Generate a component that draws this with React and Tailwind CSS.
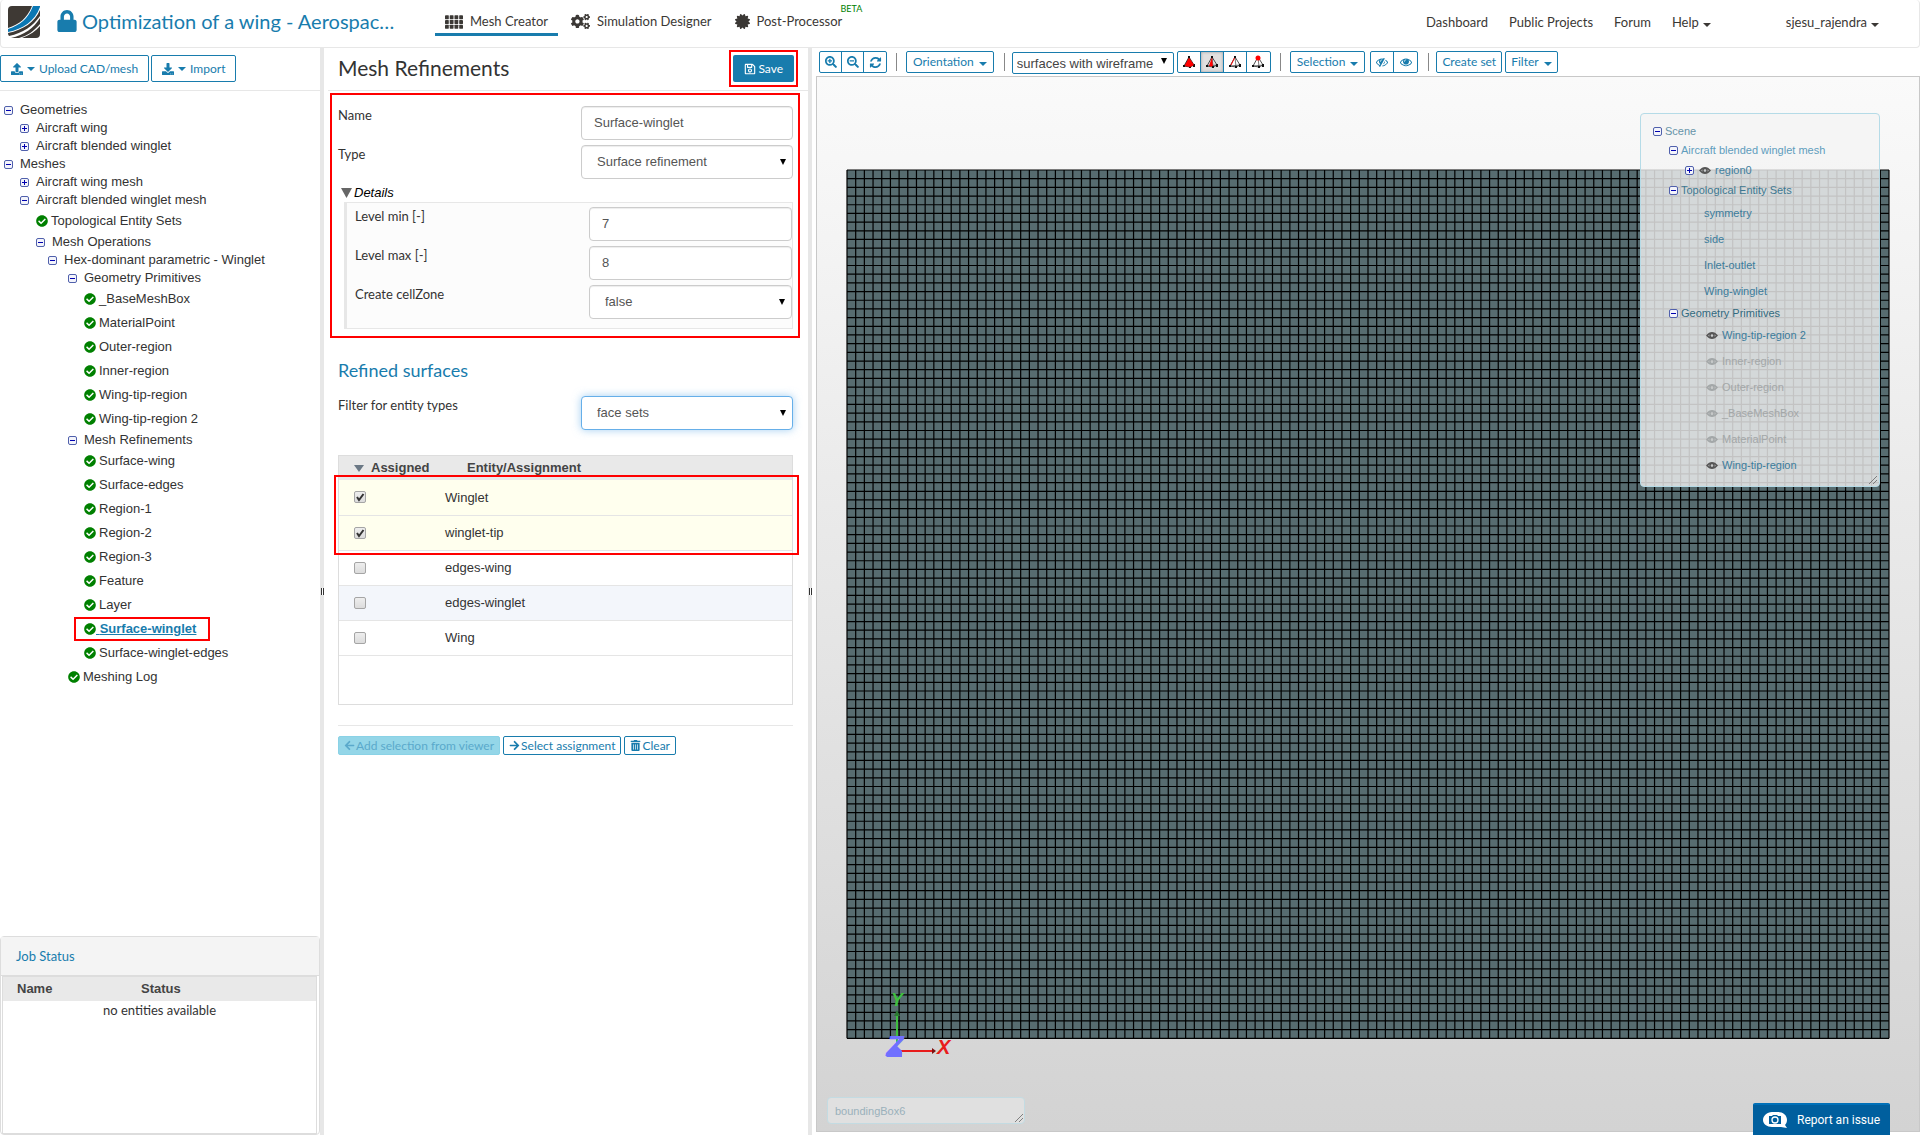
import { useState } from 'react';
import {
  FaArrowLeft,
  FaArrowRight,
  FaCertificate,
  FaCheckCircle,
  FaCogs,
  FaDownload,
  FaLock,
  FaRegSave,
  FaSearchMinus,
  FaSearchPlus,
  FaTrashAlt,
  FaUpload,
} from 'react-icons/fa';

const tree = [
  { label: 'Geometries', icon: 'minus', pad: 'pl-1' },
  { label: 'Aircraft wing', icon: 'plus', pad: 'pl-5' },
  { label: 'Aircraft blended winglet', icon: 'plus', pad: 'pl-5' },
  { label: 'Meshes', icon: 'minus', pad: 'pl-1' },
  { label: 'Aircraft wing mesh', icon: 'plus', pad: 'pl-5' },
  { label: 'Aircraft blended winglet mesh', icon: 'minus', pad: 'pl-5' },
  { label: 'Topological Entity Sets', icon: 'check', pad: 'pl-9' },
  { label: 'Mesh Operations', icon: 'minus', pad: 'pl-9' },
  { label: 'Hex-dominant parametric - Winglet', icon: 'minus', pad: 'pl-12' },
  { label: 'Geometry Primitives', icon: 'minus', pad: 'pl-17' },
  { label: '_BaseMeshBox', icon: 'check', pad: 'pl-21' },
  { label: 'MaterialPoint', icon: 'check', pad: 'pl-21' },
  { label: 'Outer-region', icon: 'check', pad: 'pl-21' },
  { label: 'Inner-region', icon: 'check', pad: 'pl-21' },
  { label: 'Wing-tip-region', icon: 'check', pad: 'pl-21' },
  { label: 'Wing-tip-region 2', icon: 'check', pad: 'pl-21' },
  { label: 'Mesh Refinements', icon: 'minus', pad: 'pl-17' },
  { label: 'Surface-wing', icon: 'check', pad: 'pl-21' },
  { label: 'Surface-edges', icon: 'check', pad: 'pl-21' },
  { label: 'Region-1', icon: 'check', pad: 'pl-21' },
  { label: 'Region-2', icon: 'check', pad: 'pl-21' },
  { label: 'Region-3', icon: 'check', pad: 'pl-21' },
  { label: 'Feature', icon: 'check', pad: 'pl-21' },
  { label: 'Layer', icon: 'check', pad: 'pl-21' },
  { label: 'Surface-winglet', icon: 'check', pad: 'pl-21', active: true },
  { label: 'Surface-winglet-edges', icon: 'check', pad: 'pl-21' },
  { label: 'Meshing Log', icon: 'check', pad: 'pl-17' },
];

const scene = [
  { label: 'Scene', toggle: 'minus', cls: 'h-[18px] pl-3 text-[#6593a8]' },
  { label: 'Aircraft blended winglet mesh', toggle: 'minus', cls: 'h-5 pl-7 text-[#5f9dbd]' },
  { label: 'region0', toggle: 'plus', eye: true, cls: 'h-5 pl-11 text-[#3f7f9f]' },
  { label: 'Topological Entity Sets', toggle: 'minus', cls: 'h-5 pl-7 text-[#3d7892]' },
  { label: 'symmetry', cls: 'h-[26px] pl-[63px] text-[#3b7c9c]' },
  { label: 'side', cls: 'h-[26px] pl-[63px] text-[#3b7c9c]' },
  { label: 'Inlet-outlet', cls: 'h-[26px] pl-[63px] text-[#3b7c9c]' },
  { label: 'Wing-winglet', cls: 'h-[26px] pl-[63px] text-[#3b7c9c]' },
  { label: 'Geometry Primitives', toggle: 'minus', cls: 'h-[18px] pl-7 text-[#326a80]' },
  { label: 'Wing-tip-region 2', eye: true, cls: 'h-[26px] pl-16 text-[#3b7c9c]' },
  { label: 'Inner-region', eye: true, off: true, cls: 'h-[26px] pl-16 text-[#a3a7a8]' },
  { label: 'Outer-region', eye: true, off: true, cls: 'h-[26px] pl-16 text-[#a3a7a8]' },
  { label: '_BaseMeshBox', eye: true, off: true, cls: 'h-[26px] pl-16 text-[#a3a7a8]' },
  { label: 'MaterialPoint', eye: true, off: true, cls: 'h-[26px] pl-16 text-[#a3a7a8]' },
  { label: 'Wing-tip-region', eye: true, cls: 'h-[26px] pl-16 text-[#3b7c9c]' },
];

const COLS = 120;
const ROWS = 100;

function Logo() {
  return (
    <svg viewBox="0 0 32 32" className="size-8">
      <path fill="#3e3934" d="M4 0h20C19 13 11 18 0 22V4q0-4 4-4z" />
      <path fill="#0a77b3" d="M25 0h7v1C27 15 15 23 0 26v-3C12 19 20 13 25 0z" />
      <path fill="#3e3934" d="M32 4v6C25 20 15 27 1 30q-1-1-1-3C15 24 27 16 32 4z" />
      <path fill="#3e3934" d="M32 12v6C26 25 19 30 11 32H3C16 29 26 22 32 12z" />
      <path fill="#3e3934" d="M32 20v8q0 4-4 4H14c8-3 14-7 18-12z" />
    </svg>
  );
}

function Caret({ className = '' }) {
  return (
    <svg viewBox="0 0 8 4" className={`h-1 w-2 shrink-0 fill-current ${className}`}>
      <path d="M0 0h8L4 4z" />
    </svg>
  );
}

function Toggle({ type }) {
  return (
    <svg viewBox="0 0 9 9" className="size-[9px] shrink-0">
      <rect x=".5" y=".5" width="8" height="8" rx="1.5" fill="#f3f4fb" stroke="#5060ac" />
      <path d={type === 'plus' ? 'M2 4.5h5M4.5 2v5' : 'M2 4.5h5'} stroke="#0000b0" />
    </svg>
  );
}

function EyeIcon({ className }) {
  return (
    <svg viewBox="0 0 1792 1792" className={className}>
      <path d="M1664 960q-152-236-381-353 61 104 61 225 0 185-131.5 316.5t-316.5 131.5-316.5-131.5-131.5-316.5q0-121 61-225-229 117-381 353 133 205 333.5 326.5t434.5 121.5 434.5-121.5 333.5-326.5zm-720-384q0-20-14-34t-34-14q-125 0-214.5 89.5t-89.5 214.5q0 20 14 34t34 14 34-14 14-34q0-86 61-147t147-61q20 0 34-14t14-34zm848 384q0 34-20 69-140 230-376.5 368.5t-499.5 138.5-499.5-139-376.5-368q-20-35-20-69t20-69q140-229 376.5-368t499.5-139 499.5 139 376.5 368q20 35 20 69z" />
    </svg>
  );
}

// flat eye used in the scene tree
function SceneEye({ className }) {
  return (
    <svg viewBox="0 0 12 9" className={`h-[9px] w-3 shrink-0 ${className}`}>
      <path fillRule="evenodd" d="M0 4.5C2 2 4 1 6 1s4 1 6 3.500C10 7 8 8 6 8S2 7 0 4.500zM2.300 4.500l1 1.200V3.300zM9.700 4.500l-1-1.200v2.400zM6 3.200a1.300 1.300 0 100 2.600 1.300 1.300 0 000-2.600z" />
    </svg>
  );
}

function EyeSlashIcon({ className }) {
  return (
    <svg viewBox="0 0 1792 1792" className={className}>
      <path d="M555 1335l78-141q-87-63-136-159t-49-203q0-121 61-225-229 117-381 353 167 258 427 375zm389-759q0-20-14-34t-34-14q-125 0-214.5 89.5t-89.5 214.5q0 20 14 34t34 14 34-14 14-34q0-86 61-147t147-61q20 0 34-14t14-34zm363-191q0 7-1 9-105 188-315 566t-316 567l-49 89q-10 16-28 16-12 0-134-70-16-10-16-28 0-12 44-87-143-65-263.5-173t-208.5-245q-20-31-20-69t20-69q153-235 380-371t496-136q89 0 180 17l54-97q10-16 28-16 5 0 18 6t31 15.5 33 18.5 31.5 18.5 19.5 11.5q16 10 16 27zm37 447q0 139-79 253.5t-209 164.5l280-502q8 45 8 84zm448 128q0 35-20 69-39 64-109 145-150 172-347.5 267t-419.5 95l74-132q212-18 392.5-137t301.5-307q-115-179-282-294l63-112q95 64 182.5 153t144.5 184q20 34 20 69z" />
    </svg>
  );
}

function RefreshIcon({ className }) {
  return (
    <svg viewBox="0 0 1792 1792" className={className}>
      <path d="M1639 1056q0 5-1 7-64 268-268 434.5t-478 166.5q-146 0-282.5-55t-243.5-157l-129 129q-19 19-45 19t-45-19-19-45v-448q0-26 19-45t45-19h448q26 0 45 19t19 45-19 45l-137 137q71 66 161 102t187 36q134 0 250-65t186-179q11-17 53-117 8-23 30-23h192q13 0 22.5 9.5t9.5 22.5zm25-800v448q0 26-19 45t-45 19h-448q-26 0-45-19t-19-45 19-45l138-138q-148-137-349-137-134 0-250 65t-186 179q-11 17-53 117-8 23-30 23h-199q-13 0-22.5-9.5t-9.5-22.5v-7q65-268 270-434.5t480-166.5q146 0 284 55.5t245 156.5l130-129q19-19 45-19t45 19 19 45z" />
    </svg>
  );
}

// 4x3 block grid used for the mesh creator tab
function GridIcon() {
  return (
    <svg viewBox="0 0 19 14" className="h-3.5 w-[18px] fill-current">
      {[0, 5, 10].map((y) =>
        [0, 5, 10, 15].map((x) => <rect key={`${x}-${y}`} x={x} y={y} width="4" height="4" rx=".5" />)
      )}
    </svg>
  );
}

// tetrahedron with the picked entity kind in red
function TetraIcon({ kind }) {
  return (
    <svg viewBox="0 0 14 14" className="size-3.5">
      <path d="M7 2L2 11l6 1 4-2z" fill={kind === 'volume' ? '#f00' : 'none'} stroke="#222" strokeWidth=".8" />
      <path d="M7 2l1 10M2 11l10-1" stroke="#222" strokeWidth=".6" fill="none" />
      {kind === 'face' && <path d="M7 2L4 11l4 1z" fill="#f00" />}
      {kind === 'edge' && <path d="M7 2L3 10" stroke="#f00" />}
      <path d="M1 10h2v2H1zM11 9h2v3h-2zM7 11h2v2H7zM6 1h2v2H6z" fill="#111" />
      {kind === 'volume' && <path d="M7 3L3 11l5 1 4-2z" fill="#f00" />}
      {kind === 'vertex' && <circle cx="7" cy="3" r="2.5" fill="#f00" />}
    </svg>
  );
}

function SelectBox({ id, defaultValue, focused }) {
  return (
    <div className="relative">
      <select
        id={id}
        defaultValue={defaultValue}
        className={`h-[34px] w-full appearance-none rounded border bg-white px-[15px] font-[Liberation_Sans,sans-serif] text-[13px] text-[#555] outline-none ${
          focused
            ? 'border-[#66afe9] shadow-[0_0_8px_rgba(102,175,233,0.6)]'
            : 'border-[#ccc] shadow-[inset_0_1px_1px_rgba(0,0,0,0.075)]'
        }`}
      >
        <option>{defaultValue}</option>
      </select>
      <svg viewBox="0 0 6 6" className="pointer-events-none absolute top-3.5 right-[7px] size-1.5">
        <path d="M0 0h6L3 6z" />
      </svg>
    </div>
  );
}

function TextBox({ id, defaultValue }) {
  return (
    <input
      id={id}
      type="text"
      defaultValue={defaultValue}
      className="h-[34px] w-full rounded border border-[#ccc] bg-white px-3 pb-0.5 font-[Liberation_Sans,sans-serif] text-[13px] text-[#555] shadow-[inset_0_1px_1px_rgba(0,0,0,0.075)] outline-none"
    />
  );
}

function Field({ id, label, children, width = 'w-[212px]' }) {
  return (
    <div className="flex items-start justify-between">
      <label htmlFor={id} className="text-[13px] leading-[18px]">
        {label}
      </label>
      <div className={width}>{children}</div>
    </div>
  );
}

function Splitter() {
  return (
    <div className="flex w-1 shrink-0 items-center justify-end bg-[#e7e7e7]">
      <div className="h-[7px] w-[3px] border-x border-[#333] bg-white" />
    </div>
  );
}

function Header() {
  const tab = 'flex h-9 items-center gap-[7px] border-b-3 px-2.5 pt-2.5 text-[13px]';
  return (
    <header className="flex h-12 shrink-0 items-start rounded border border-t-0 border-[#e7e7e7] bg-white text-[#3b3835]">
      <a href="#home" aria-label="Home" className="mt-1.5 ml-[7px]">
        <Logo />
      </a>
      <h1 className="mt-[5px] ml-4 flex h-8 w-[354px] items-center gap-1 text-xl text-[#187cad]">
        <FaLock className="size-[22px] shrink-0" />
        <span className="truncate">Optimization of a wing - Aerospac…</span>
      </h1>
      <nav className="ml-[25px] flex gap-[3px]">
        <a href="#mesh" className={`${tab} border-[#187cad]`}>
          <GridIcon />
          Mesh Creator
        </a>
        <a href="#simulation" className={`${tab} border-transparent`}>
          <FaCogs className="size-[19px]" />
          Simulation Designer
        </a>
        <a href="#post" className={`${tab} relative border-transparent`}>
          <FaCertificate className="size-[15px]" />
          Post-Processor
          <span className="absolute top-0.5 -right-2.5 text-[9px] text-[#008000]">BETA</span>
        </a>
      </nav>
      <nav className="mr-10 ml-auto flex h-[46px] items-center gap-[21px] text-[13px]">
        <a href="#dashboard">Dashboard</a>
        <a href="#projects">Public Projects</a>
        <a href="#forum">Forum</a>
        <button className="flex items-center gap-1">
          Help
          <Caret className="mt-1" />
        </button>
        <button className="ml-[54px] flex items-center gap-1">
          sjesu_rajendra
          <Caret className="mt-1" />
        </button>
      </nav>
    </header>
  );
}

function TreeRow({ item }) {
  const leaf = item.icon === 'check';
  return (
    <li className={`flex items-center ${item.pad} ${leaf ? 'h-6' : 'h-[18px]'}`}>
      {leaf ? (
        <a href="#item" className="relative flex items-center">
          <FaCheckCircle className="size-3 text-[#008000]" />
          {item.active ? (
            <>
              <span className="font-bold whitespace-pre text-[#187cad] underline"> {item.label}</span>
              <span className="pointer-events-none absolute -inset-y-0.5 -right-3.5 -left-2.5 border-2 border-[#f00]" />
            </>
          ) : (
            <span className="ml-[3px]">{item.label}</span>
          )}
        </a>
      ) : (
        <button className="flex items-center gap-[7px]">
          <Toggle type={item.icon} />
          {item.label}
        </button>
      )}
    </li>
  );
}

function Sidebar() {
  const button = 'flex h-[27px] items-center gap-1 rounded-xs border border-[#187cad] px-2.5 text-xs text-[#187cad]';
  return (
    <aside className="flex w-80 shrink-0 flex-col">
      <div className="flex gap-0.5 border-b border-[#e7e7e7] pt-[7px] pb-2">
        <button className={button}>
          <FaUpload className="size-3" />
          <Caret />
          Upload CAD/mesh
        </button>
        <button className={button}>
          <FaDownload className="size-3" />
          <Caret />
          Import
        </button>
      </div>
      <ul className="pt-2.5 font-[Liberation_Sans,sans-serif] text-[13px] leading-5 text-[#333]">
        {tree.map((item) => (
          <TreeRow key={item.label} item={item} />
        ))}
      </ul>
      <section className="mt-auto flex h-[199px] flex-col rounded border border-[#ddd]">
        <h2 className="h-[39px] border-b border-[#ddd] bg-[#f4f4f4] px-[15px] text-[13px] leading-[38px] text-[#187cad]">
          Job Status
        </h2>
        <div className="mr-0.5 ml-px flex-1 border border-[#ddd]">
          <table className="w-full table-fixed">
            <thead className="bg-[#e9e9e9] text-left font-[Liberation_Sans,sans-serif] text-[13px] text-[#444]">
              <tr className="h-6">
                <th className="w-[124px] pl-3.5">Name</th>
                <th className="pl-3.5">Status</th>
              </tr>
            </thead>
            <tbody>
              <tr>
                <td colSpan={2} className="text-center text-[13px] leading-[18px]">
                  no entities available
                </td>
              </tr>
            </tbody>
          </table>
        </div>
      </section>
    </aside>
  );
}

function AssignmentTable() {
  const [rows, setRows] = useState([
    { name: 'Winglet', checked: true },
    { name: 'winglet-tip', checked: true },
    { name: 'edges-wing', checked: false },
    { name: 'edges-winglet', checked: false },
    { name: 'Wing', checked: false },
  ]);

  const toggle = (name) => {
    setRows((prev) => prev.map((r) => (r.name === name ? { ...r, checked: !r.checked } : r)));
  };

  return (
    <div className="relative mt-[25px] h-[250px] border border-[#ddd]">
      <table className="w-full table-fixed text-left font-[Liberation_Sans,sans-serif] text-[13px]">
        <thead className="bg-[#e9e9e9] text-[#444]">
          <tr className="h-6">
            <th className="w-24 pl-[15px]">
              <span className="flex items-center gap-[7px]">
                <svg viewBox="0 0 10 7" className="h-[7px] w-2.5 fill-[#6b7885]">
                  <path d="M0 0h10L5 7z" />
                </svg>
                Assigned
              </span>
            </th>
            <th className="pl-8">Entity/Assignment</th>
          </tr>
        </thead>
        <tbody>
          {rows.map((row) => (
            <tr
              key={row.name}
              className={`h-[35px] border-b border-[#e5e5e5] ${
                row.checked ? 'bg-[#ffffee]' : row.name === 'edges-winglet' ? 'bg-[#f3f6fb]' : ''
              }`}
            >
              <td className="pl-[15px]">
                <span className="relative flex size-3">
                  <input
                    type="checkbox"
                    id={row.name}
                    checked={row.checked}
                    onChange={() => toggle(row.name)}
                    className="size-3 appearance-none rounded-xs border border-[#a5a5a5] bg-linear-to-b from-[#eee] to-[#dcdcdc]"
                  />
                  {row.checked && (
                    <svg viewBox="0 0 12 12" className="pointer-events-none absolute inset-0">
                      <path d="M3 6l2 3 4.5-6" fill="none" stroke="#333" strokeWidth="2" />
                    </svg>
                  )}
                </span>
              </td>
              <td className="pl-2.5 text-[#333]">
                <label htmlFor={row.name}>{row.name}</label>
              </td>
            </tr>
          ))}
        </tbody>
      </table>
      <div className="pointer-events-none absolute top-[19px] -right-[7px] -left-[5px] h-20 border-2 border-[#f00]" />
    </div>
  );
}

function RefinementPanel() {
  const small = 'flex h-[19px] items-center gap-px rounded-xs border px-[5px] text-xs';
  return (
    <main className="w-[484px] shrink-0">
      <div className="ml-1 flex h-[43px] items-start justify-between border-b border-[#e7e7e7] pl-2.5">
        <h2 className="text-[21px] leading-10">Mesh Refinements</h2>
        <div className="mt-0.5 mr-2.5 border-2 border-[#f00] px-0.5 py-[3px]">
          <button className="flex h-[27px] items-center gap-0.5 rounded-xs bg-[#187cad] px-[11px] text-xs text-white">
            <FaRegSave className="size-3" />
            Save
          </button>
        </div>
      </div>

      <section className="mt-0.5 mr-2 ml-1.5 border-2 border-[#f00] pb-[7px]">
        <div className="space-y-[5px] pt-[11px] pr-[5px] pl-1.5">
          <Field id="name" label="Name">
            <TextBox id="name" defaultValue="Surface-winglet" />
          </Field>
          <Field id="type" label="Type">
            <SelectBox id="type" defaultValue="Surface refinement" />
          </Field>
        </div>
        <button className="mt-[3px] flex h-5 items-center gap-0.5 pt-0.5 pl-[9px] font-[Liberation_Sans,sans-serif] text-[13px] text-black italic">
          <svg viewBox="0 0 11 10" className="h-2.5 w-[11px] fill-[#666]">
            <path d="M0 0h11L5.500 10z" />
          </svg>
          Details
        </button>
        <div className="mr-[5px] ml-3 space-y-[5px] border border-l-3 border-[#e7e7e7] bg-[#fcfcfc] pt-1 pb-[9px] pl-2">
          <Field id="level-min" label="Level min [-]" width="w-[203px]">
            <TextBox id="level-min" defaultValue="7" />
          </Field>
          <Field id="level-max" label="Level max [-]" width="w-[203px]">
            <TextBox id="level-max" defaultValue="8" />
          </Field>
          <Field id="cell-zone" label="Create cellZone" width="w-[203px]">
            <SelectBox id="cell-zone" defaultValue="false" />
          </Field>
        </div>
      </section>

      <section className="mr-[15px] ml-3.5">
        <h3 className="mt-5 mb-3.5 text-lg leading-6 text-[#187cad]">Refined surfaces</h3>
        <Field id="entity-filter" label="Filter for entity types">
          <SelectBox id="entity-filter" defaultValue="face sets" focused />
        </Field>
        <AssignmentTable />
        <div className="mt-5 flex gap-[3px] border-t border-[#e7e7e7] pt-2.5">
          <button disabled className={`${small} border-[#8ad2e6] bg-[#94d6e8] text-[#5aa9cb]`}>
            <FaArrowLeft className="size-[11px]" />
            Add selection from viewer
          </button>
          <button className={`${small} border-[#187cad] text-[#187cad]`}>
            <FaArrowRight className="size-[11px]" />
            Select assignment
          </button>
          <button className={`${small} border-[#187cad] text-[#187cad]`}>
            <FaTrashAlt className="size-[11px]" />
            Clear
          </button>
        </div>
      </section>
    </main>
  );
}

function Toolbar() {
  const button = 'flex h-[22px] items-center gap-[5px] rounded-xs border border-[#187cad] text-xs text-[#187cad]';
  const group = 'flex h-[22px] divide-x divide-[#187cad] overflow-hidden rounded-xs border border-[#187cad] text-[#187cad]';
  const cell = 'flex w-[22px] items-center justify-center';
  const wideCell = 'flex w-[23px] items-center justify-center';
  const divider = 'h-[18px] w-px bg-[#888]';
  return (
    <div className="flex h-7 shrink-0 items-center pl-[3px]">
      <div className={group}>
        <button aria-label="Zoom in" className={cell}>
          <FaSearchPlus className="size-3" />
        </button>
        <button aria-label="Zoom out" className={cell}>
          <FaSearchMinus className="size-3" />
        </button>
        <button aria-label="Reset view" className={cell}>
          <RefreshIcon className="size-[13px] fill-current" />
        </button>
      </div>
      <div className={`${divider} mx-[9px]`} />
      <button className={`${button} px-1.5`}>
        Orientation
        <Caret className="mt-1" />
      </button>
      <div className={`${divider} mr-[7px] ml-2.5`} />
      <div className="relative">
        <select
          aria-label="Render mode"
          className="h-[22px] w-[162px] appearance-none rounded-xs border border-[#187cad] bg-white pl-1 font-[Liberation_Sans,sans-serif] text-[13px] text-[#444]"
        >
          <option>surfaces with wireframe</option>
        </select>
        <svg viewBox="0 0 6 6" className="pointer-events-none absolute top-2 right-[7px] size-1.5">
          <path d="M0 0h6L3 6z" />
        </svg>
      </div>
      <div className={`${group} ml-[3px]`}>
        <button aria-label="Pick volumes" className={wideCell}>
          <TetraIcon kind="volume" />
        </button>
        <button aria-label="Pick faces" className={`${wideCell} bg-[#e0e0e0] shadow-[inset_0_0_3px_#999]`}>
          <TetraIcon kind="face" />
        </button>
        <button aria-label="Pick edges" className={wideCell}>
          <TetraIcon kind="edge" />
        </button>
        <button aria-label="Pick vertices" className={wideCell}>
          <TetraIcon kind="vertex" />
        </button>
      </div>
      <div className={`${divider} mx-[9px]`} />
      <button className={`${button} px-1.5`}>
        Selection
        <Caret className="mt-1" />
      </button>
      <div className={`${group} ml-[5px]`}>
        <button aria-label="Hide selection" className={wideCell}>
          <EyeSlashIcon className="size-3 fill-current" />
        </button>
        <button aria-label="Show all" className={wideCell}>
          <EyeIcon className="size-3 fill-current" />
        </button>
      </div>
      <div className={`${divider} mr-[7px] ml-2.5`} />
      <button className={`${button} px-[5px]`}>Create set</button>
      <button className={`${button} ml-[3px] px-[5px]`}>
        Filter
        <Caret className="mt-1" />
      </button>
    </div>
  );
}

function Mesh() {
  const vertical = Array.from({ length: COLS + 1 }, (_, i) => `M${i} 0V${ROWS}`).join('');
  const horizontal = Array.from({ length: ROWS + 1 }, (_, i) => `M0 ${i}H${COLS}`).join('');
  return (
    <svg viewBox="0 0 120 100" className="block w-full overflow-visible">
      <rect width="120" height="100" fill="#576c70" />
      <path d={vertical + horizontal} stroke="#000" strokeWidth=".14" fill="none" />
    </svg>
  );
}

function Axes() {
  return (
    <svg viewBox="0 0 80 80" className="absolute bottom-[68px] left-[63px] size-20 font-[Liberation_Sans,sans-serif] font-bold italic">
      <path d="M17 62V32" stroke="#3fbf3f" strokeWidth="2" />
      <path d="M14 33l3-6 3 6z" fill="#2c7a33" />
      <text x="11" y="23" fontSize="18" fill="#3fbf3f">Y</text>
      <path d="M18 68h36" stroke="#e81c1c" strokeWidth="2" />
      <path d="M52 65l4 3-4 3z" fill="#7c1010" />
      <text x="57" y="71" fontSize="20" fill="#e81c1c">X</text>
      <path d="M6 74l11-11 5 5v6z" fill="#7070ff" />
      <text x="6" y="73" fontSize="29" fill="#7070ff">Z</text>
    </svg>
  );
}

function Grip() {
  return (
    <svg viewBox="0 0 8 8" className="pointer-events-none absolute right-0.5 bottom-0.5 size-2">
      <path d="M0 8L8 0M4 8l4-4" stroke="#666" strokeWidth=".8" />
    </svg>
  );
}

function ScenePanel() {
  return (
    <div className="absolute top-9 right-[39px] w-60 rounded border border-[#b5dbe7] bg-[#f4f4f4]/80 pt-2 pb-2 font-[Liberation_Sans,sans-serif] text-[11px]">
      <ul>
        {scene.map((item) => (
          <li key={item.label} className={`flex items-center gap-[3px] ${item.cls}`}>
            {item.toggle && <Toggle type={item.toggle} />}
            {item.eye && (
              <SceneEye className={`mx-px ${item.toggle ? 'ml-0.5' : ''} ${item.off ? 'fill-[#a3a7a8]' : 'fill-[#555]'}`} />
            )}
            <a href="#entity">{item.label}</a>
          </li>
        ))}
      </ul>
      <Grip />
    </div>
  );
}

function Viewer() {
  return (
    <section className="flex min-w-0 flex-1 flex-col pl-1">
      <Toolbar />
      <div className="relative mb-[3px] flex flex-1 items-center border border-[#c8c8c8] bg-linear-to-b from-[#fafafa] to-[#d3d3d3] px-[30px]">
        <Mesh />
        <Axes />
        <ScenePanel />
        <div className="absolute bottom-[7px] left-2.5">
          <input
            type="text"
            aria-label="Picked entity"
            defaultValue="boundingBox6"
            className="h-[27px] w-[198px] rounded border border-[#c3dbe2] bg-[#e0e0e0] px-[7px] font-[Liberation_Sans,sans-serif] text-[11px] text-[#9ab0bb] outline-none"
          />
          <Grip />
        </div>
        <button className="absolute right-[29px] -bottom-1 flex h-8 w-[137px] items-center gap-2.5 rounded-t-xs border-t-2 border-[#0070b8] bg-[#005f9e] pl-2.5 font-[Roboto,sans-serif] text-xs text-white">
          <svg viewBox="0 0 24 16" className="h-4 w-6 shrink-0">
            <path d="M9 0h6c5 0 9 3 9 8 0 2-1 4-2 5l2 3-6-1H9c-5 0-9-3-9-7s4-8 9-8z" fill="#fff" />
            <path d="M6 4h3l1-1h4l1 1h3v8H6z" fill="#005f9e" />
            <circle cx="12" cy="8" r="3" fill="none" stroke="#fff" strokeWidth="1.300" />
          </svg>
          Report an issue
        </button>
      </div>
    </section>
  );
}

export default function App() {
  return (
    <div className="flex min-h-screen flex-col bg-white font-[Lato,sans-serif] text-[#333]">
      <Header />
      <div className="flex flex-1">
        <Sidebar />
        <Splitter />
        <RefinementPanel />
        <Splitter />
        <Viewer />
      </div>
    </div>
  );
}
